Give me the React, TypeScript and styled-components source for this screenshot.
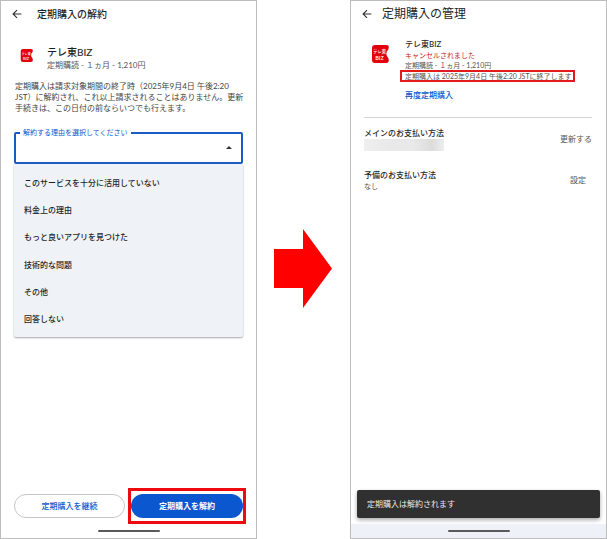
import React, { useState } from "react";
import styled, { createGlobalStyle, css } from "styled-components";

const GlobalStyle = createGlobalStyle`
  *, *::before, *::after { box-sizing: border-box; }
  body {
    margin: 0;
    background: #fff;
    color: #1f1f1f;
    font-family: Lato, "Noto Sans CJK JP", sans-serif;
    font-size: 8px;
    line-height: 12px;
  }
  button, select { font: inherit; color: inherit; margin: 0; padding: 0; border: 0; background: none; }
  button { cursor: pointer; }
  h1, h2, h3, p, ul { margin: 0; padding: 0; font-size: inherit; font-weight: 500; }
  p { font-weight: 400; }
`;

const Page = styled.main`
  display: grid;
  grid-template-columns: minmax(0, 257fr) minmax(60px, 93fr) minmax(0, 257fr);
  min-height: 100vh;
`;

const Screen = styled.section`
  display: flex;
  flex-direction: column;
  border: 1px solid #bdbdbd;
`;

const AppBar = styled.header<{ $large?: boolean }>`
  display: flex;
  align-items: center;
  gap: ${(p) => (p.$large ? 10 : 15)}px;
  height: 26px;
  padding: 0 11px;
  font-size: ${(p) => (p.$large ? 12 : 10)}px;
  line-height: 18px;
  h1 { font-weight: ${(p) => (p.$large ? 400 : 500)}; }
`;

const BackButton = styled.button`
  display: flex;
  svg { display: block; }
`;

const Product = styled.div<{ $large?: boolean }>`
  display: flex;
  align-items: flex-start;
  ${(p) =>
    p.$large
      ? css`gap: 16px; padding: 11px 14px 0 20px;`
      : css`gap: 14px; padding: 18px 14px 0 19px;`}
  svg { flex: none; display: block; margin-top: ${(p) => (p.$large ? 6 : 3)}px; }
`;

const ProductName = styled.h2<{ $large?: boolean }>`
  font-size: ${(p) => (p.$large ? 10 : 8)}px;
  line-height: ${(p) => (p.$large ? 14 : 12)}px;
`;

const Meta = styled.p<{ $small?: boolean; $alert?: boolean }>`
  color: ${(p) => (p.$alert ? "#c5221f" : "#555")};
  font-size: ${(p) => (p.$small ? 7 : 8)}px;
  line-height: ${(p) => (p.$small ? 10 : 12)}px;
`;

const MarkedMeta = styled(Meta)`
  width: max-content;
  margin-left: -5px;
  padding: 0 1px 0 3px;
  border: 2px solid #e3191b;
  line-height: 8px;
`;

const ResubscribeLink = styled.a`
  display: block;
  margin-top: 7px;
  color: #0b57d0;
  font-weight: 500;
  text-decoration: none;
`;

const Notice = styled.p`
  padding: 10px 8px 0 14px;
  color: #444;
  line-height: 11px;
`;

const Field = styled.div`
  position: relative;
  margin: 18px 13px 0;
`;

const FieldLabel = styled.label`
  position: absolute;
  top: -5px;
  left: 6px;
  padding: 0 3px;
  background: #fff;
  color: #0b57d0;
  font-size: 7px;
  line-height: 10px;
`;

const FieldSelect = styled.select`
  display: block;
  width: 100%;
  height: 32px;
  padding: 0 24px 0 9px;
  border: 2px solid #1a5bc4;
  border-radius: 2px;
  appearance: none;
  outline: none;
`;

const Caret = styled.svg`
  position: absolute;
  top: 14px;
  right: 11px;
  pointer-events: none;
`;

const OptionList = styled.ul`
  display: flex;
  flex-direction: column;
  height: 173px;
  margin: 0 13px;
  padding: 5px 0 4px;
  border-radius: 0 0 2px 2px;
  background: #eff3f8;
  box-shadow: 0 1px 2px rgba(0, 0, 0, 0.35);
  list-style: none;
  li { flex: 1; display: flex; }
`;

const OptionButton = styled.button`
  flex: 1;
  padding: 0 10px;
  text-align: left;
  font-weight: 500;
`;

const Actions = styled.div`
  display: grid;
  grid-template-columns: 15fr 16fr;
  align-items: center;
  gap: 3px;
  margin: auto 10px 0 13px;
`;

const PillButton = styled.button<{ $filled?: boolean }>`
  width: 100%;
  height: 24px;
  border-radius: 12px;
  font-weight: ${(p) => (p.$filled ? 700 : 500)};
  ${(p) =>
    p.$filled
      ? css`background: #0b57d0; color: #fff;`
      : css`border: 1px solid #c4c7c5; color: #0b57d0;`}
`;

const Highlight = styled.div`
  padding: 3px 0;
  border: 3px solid #ee0a0e;
`;

const NavBar = styled.footer<{ $tinted?: boolean }>`
  display: flex;
  justify-content: center;
  align-items: center;
  height: 14px;
  margin-top: ${(p) => (p.$tinted ? 6 : 0)}px;
  background: ${(p) => (p.$tinted ? "#eef2f8" : "transparent")};
  &::before {
    content: "";
    width: 62px;
    height: 2px;
    border-radius: 1px;
    background: #5a5a5c;
  }
`;

const ArrowCell = styled.div`
  display: flex;
  align-items: center;
  justify-content: center;
  padding: 0 1px 2px 0;
  svg { display: block; }
`;

const Payments = styled.div`
  display: flex;
  flex-direction: column;
  gap: 16px;
  margin: 16px 14px 0 13px;
  padding-top: 8px;
  border-top: 1px solid #d5d5d5;
`;

const PaymentRow = styled.div`
  display: flex;
  align-items: center;
  justify-content: space-between;
  min-height: 25px;
`;

const Redacted = styled.div`
  width: 80px;
  height: 12px;
  background: linear-gradient(90deg, #efefef, #e8e8e8 35%, #e9e9e9 60%, #dcdcdc 85%, #eee);
`;

const TextButton = styled.button<{ $inset?: boolean }>`
  margin-right: ${(p) => (p.$inset ? 6 : 0)}px;
  color: #555;
`;

const Toast = styled.div`
  margin: auto 6px 0;
  padding: 8px 10px;
  border-radius: 2px;
  background: #303030;
  color: #e8e8e8;
  box-shadow: 0 2px 4px rgba(0, 0, 0, 0.35);
`;

const BackIcon = () => (
  <svg width="10" height="10" viewBox="0 0 10 10" fill="none" stroke="#303030" strokeWidth="1.1" aria-hidden="true">
    <path d="M9.4 5H1.2M5 1.1L1.1 5L5 8.9" />
  </svg>
);

const BizLogo = ({ width, height }: { width: number; height: number }) => (
  <svg width={width} height={height} viewBox="1 0 18 20" role="img" aria-label="テレ東BIZ">
    <path
      fill="#e2000f"
      d="M5 1H16.5Q19 1 18.8 3.5Q18.6 6 16.8 7.3Q15.8 10 17 12.2Q18.8 13.5 18.8 16.5Q18.7 19 16 19H5Q2 19 2 16V4Q2 1 5 1Z"
    />
    <g fill="#fff" fontFamily="Noto Sans CJK JP, sans-serif" fontWeight="500" textAnchor="middle">
      <text x="9.6" y="9.2" fontSize="4.2">テレ東</text>
      <text x="9.4" y="15.6" fontSize="5.4">BIZ</text>
    </g>
  </svg>
);

const reasons = [
  "このサービスを十分に活用していない",
  "料金上の理由",
  "もっと良いアプリを見つけた",
  "技術的な問題",
  "その他",
  "回答しない",
];

const CancelScreen = () => {
  const [reason, setReason] = useState("");
  return (
    <Screen>
      <AppBar>
        <BackButton aria-label="戻る"><BackIcon /></BackButton>
        <h1>定期購入の解約</h1>
      </AppBar>
      <Product>
        <BizLogo width={13} height={15} />
        <div>
          <ProductName $large>テレ東BIZ</ProductName>
          <Meta>定期購読 - １ヵ月 - 1,210円</Meta>
        </div>
      </Product>
      <Notice>
        定期購入は請求対象期間の終了時（2025年9月4日 午後2:20<br />
        JST）に解約され、これ以上請求されることはありません。更新<br />
        手続きは、この日付の前ならいつでも行えます。
      </Notice>
      <Field>
        <FieldSelect id="reason" value={reason} onChange={(e) => setReason(e.target.value)}>
          <option value="" />
          {reasons.map((r) => <option key={r}>{r}</option>)}
        </FieldSelect>
        <FieldLabel htmlFor="reason">解約する理由を選択してください</FieldLabel>
        <Caret width="6" height="3" viewBox="0 0 6 3" aria-hidden="true">
          <path d="M0 3L3 0L6 3Z" fill="#303030" />
        </Caret>
      </Field>
      <OptionList>
        {reasons.map((r) => (
          <li key={r}><OptionButton onClick={() => setReason(r)}>{r}</OptionButton></li>
        ))}
      </OptionList>
      <Actions>
        <PillButton>定期購入を継続</PillButton>
        <Highlight><PillButton $filled>定期購入を解約</PillButton></Highlight>
      </Actions>
      <NavBar />
    </Screen>
  );
};

const ManageScreen = () => (
  <Screen>
    <AppBar $large>
      <BackButton aria-label="戻る"><BackIcon /></BackButton>
      <h1>定期購入の管理</h1>
    </AppBar>
    <Product $large>
      <BizLogo width={18} height={20} />
      <div>
        <ProductName>テレ東BIZ</ProductName>
        <Meta $small $alert>キャンセルされました</Meta>
        <Meta $small>定期購読 - １ヵ月 - 1,210円</Meta>
        <MarkedMeta $small>定期購入は 2025年9月4日 午後2:20 JSTに終了します</MarkedMeta>
        <ResubscribeLink href="#resubscribe">再度定期購入</ResubscribeLink>
      </div>
    </Product>
    <Payments>
      <PaymentRow>
        <div>
          <h3>メインのお支払い方法</h3>
          <Redacted />
        </div>
        <TextButton>更新する</TextButton>
      </PaymentRow>
      <PaymentRow>
        <div>
          <h3>予備のお支払い方法</h3>
          <Meta $small>なし</Meta>
        </div>
        <TextButton $inset>設定</TextButton>
      </PaymentRow>
    </Payments>
    <Toast role="status">定期購入は解約されます</Toast>
    <NavBar $tinted />
  </Screen>
);

export default function App() {
  return (
    <>
      <GlobalStyle />
      <Page lang="ja">
        <CancelScreen />
        <ArrowCell>
          <svg width="58" height="79" viewBox="0 0 58 79" aria-hidden="true">
            <path d="M0 20H29V0L58 39.5L29 79V59H0Z" fill="#fe0000" />
          </svg>
        </ArrowCell>
        <ManageScreen />
      </Page>
    </>
  );
}
